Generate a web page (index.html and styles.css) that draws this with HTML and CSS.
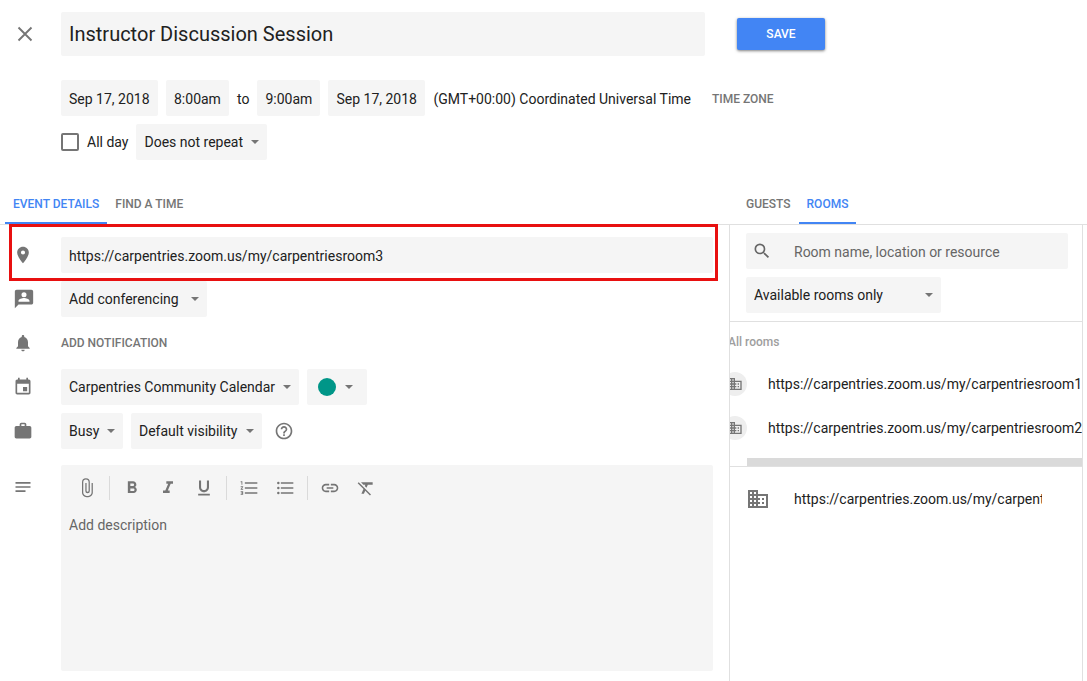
FILE: index.html
```html
<!DOCTYPE html>
<html lang="en">
<head>
<meta charset="utf-8">
<title>Instructor Discussion Session</title>
<meta name="viewport" content="width=device-width, initial-scale=1">
<link rel="stylesheet" href="styles.css">
</head>
<body>
<svg class="sprite" aria-hidden="true">
  <symbol id="building" viewBox="0 0 24 24"><path d="M12 7V3H2v18h20V7H12zM6 19H4v-2h2v2zm0-4H4v-2h2v2zm0-4H4V9h2v2zm0-4H4V5h2v2zm4 12H8v-2h2v2zm0-4H8v-2h2v2zm0-4H8V9h2v2zm0-4H8V5h2v2zm10 12h-8v-2h2v-2h-2v-2h2v-2h-2V9h8v10zm-2-8h-2v2h2v-2zm0 4h-2v2h2v-2z"/></symbol>
</svg>
<form class="page">
  <header class="head">
    <div class="title-row">
      <button type="button" class="close" aria-label="Close"><svg class="icon-l" viewBox="0 0 24 24"><path d="M5.500 5.500l13 13M18.500 5.500l-13 13" fill="none" stroke="currentColor" stroke-width="1.900"/></svg></button>
      <input class="field title" type="text" aria-label="Title" value="Instructor Discussion Session">
    </div>
    <div class="save-cell"><button type="button" class="save">SAVE</button></div>
  </header>

  <div class="when">
    <input class="field date" type="text" aria-label="Start date" value="Sep 17, 2018">
    <input class="field time" type="text" aria-label="Start time" value="8:00am">
    <span class="when-text">to</span>
    <input class="field time" type="text" aria-label="End time" value="9:00am">
    <input class="field date" type="text" aria-label="End date" value="Sep 17, 2018">
    <span class="when-text">(GMT+00:00) Coordinated Universal Time</span>
    <button type="button" class="text-btn zone">TIME ZONE</button>
  </div>
  <div class="when">
    <input class="check" type="checkbox" id="allday">
    <label for="allday">All day</label>
    <span class="drop"><select class="field" aria-label="Repeat"><option>Does not repeat</option></select><i class="arrow"></i></span>
  </div>

  <nav class="tabs">
    <div class="tab-group main-tabs">
      <button type="button" class="tab on">EVENT DETAILS</button>
      <button type="button" class="tab">FIND A TIME</button>
    </div>
    <div class="tab-group side-tabs">
      <button type="button" class="tab">GUESTS</button>
      <button type="button" class="tab on">ROOMS</button>
    </div>
  </nav>

  <main class="body">
    <section class="details">
      <div class="row">
        <div class="highlight"></div>
        <svg class="icon" viewBox="0 0 24 24"><path d="M12 2C8.130 2 5 5.130 5 9c0 5.250 7 13 7 13s7-7.750 7-13c0-3.870-3.130-7-7-7zm0 9.500a2.500 2.500 0 0 1 0-5 2.500 2.500 0 0 1 0 5z"/></svg>
        <input class="field line grow" type="text" aria-label="Location" value="https://carpentries.zoom.us/my/carpentriesroom3">
      </div>
      <div class="row">
        <svg class="icon wide" viewBox="0 0 24 24"><path fill-rule="evenodd" d="M20 2H4c-1.100 0-1.990.9-1.990 2L2 22l4-4h14c1.100 0 2-.9 2-2V4c0-1.100-.9-2-2-2zm-8 2.500a2.750 2.750 0 1 1 0 5.500 2.750 2.750 0 0 1 0-5.500zM18 15H6v-.9c0-2 4-3.100 6-3.100s6 1.100 6 3.100v.9z"/></svg>
        <span class="drop roomy"><select class="field" aria-label="Conferencing"><option>Add conferencing</option></select><i class="arrow"></i></span>
      </div>
      <div class="row">
        <svg class="icon" viewBox="0 0 24 24"><path d="M12 22c1.100 0 2-.9 2-2h-4c0 1.100.890 2 2 2zm6-6v-5c0-3.070-1.640-5.640-4.500-6.320V4c0-.830-.670-1.500-1.500-1.500s-1.500.670-1.500 1.500v.680C7.630 5.360 6 7.920 6 11v5l-2 2v1h16v-1l-2-2z"/></svg>
        <button type="button" class="text-btn">ADD NOTIFICATION</button>
      </div>
      <div class="row">
        <svg class="icon" viewBox="0 0 24 24"><path d="M17 12h-5v5h5v-5zM16 1v2H8V1H6v2H5c-1.110 0-1.990.9-1.990 2L3 19c0 1.100.890 2 2 2h14c1.100 0 2-.9 2-2V5c0-1.100-.9-2-2-2h-1V1h-2zm3 18H5V8h14v11z"/></svg>
        <span class="drop snug"><select class="field" aria-label="Calendar"><option>Carpentries Community Calendar</option></select><i class="arrow"></i></span>
        <button type="button" class="field colour" aria-label="Event colour"><i class="dot"></i><i class="arrow"></i></button>
      </div>
      <div class="row">
        <svg class="icon" viewBox="0 0 24 24"><path fill-rule="evenodd" d="M20 6h-4V4c0-1.110-.890-2-2-2h-4c-1.110 0-2 .890-2 2v2H4c-1.110 0-1.990.890-1.990 2L2 19c0 1.110.890 2 2 2h16c1.110 0 2-.890 2-2V8c0-1.110-.890-2-2-2zm-6 0h-4V4h4v2z"/></svg>
        <span class="drop snug"><select class="field" aria-label="Availability"><option>Busy</option></select><i class="arrow"></i></span>
        <span class="drop"><select class="field" aria-label="Visibility"><option>Default visibility</option></select><i class="arrow"></i></span>
        <button type="button" class="help" aria-label="Help"><svg class="icon-m" viewBox="0 0 24 24"><path d="M11 18h2v-2h-2v2zm1-16C6.480 2 2 6.480 2 12s4.480 10 10 10 10-4.480 10-10S17.520 2 12 2zm0 18c-4.410 0-8-3.590-8-8s3.590-8 8-8 8 3.590 8 8-3.590 8-8 8zm0-14c-2.210 0-4 1.790-4 4h2c0-1.100.9-2 2-2s2 .9 2 2c0 2-3 1.750-3 5h2c0-2.250 3-2.500 3-5 0-2.210-1.790-4-4-4z"/></svg></button>
      </div>
      <div class="row desc-row">
        <svg class="icon" viewBox="0 0 24 24"><path d="M3 18h12v-2H3v2zM3 6v2h18V6H3zm0 7h18v-2H3v2z"/></svg>
        <div class="desc">
          <div class="toolbar">
            <button type="button" class="tool" aria-label="Attach"><svg class="icon-m" viewBox="0 0 24 24"><path d="M17.500 6v11.500c0 2.210-1.790 4-4 4h-2c-2.210 0-4-1.790-4-4V5A3 3 0 0 1 13.900 5v10.500c0 .550-.450 1-1 1s-1.400-.450-1.400-1V6H10v9.500a2.700 2.700 0 0 0 5.400 0V5a4.700 4.700 0 0 0-9.400 0v12.500C6 20.540 8.460 23 11.500 23h2c3.040 0 5.500-2.460 5.500-5.500V6h-1.500z"/></svg></button>
            <span class="sep"></span>
            <button type="button" class="tool" aria-label="Bold"><svg class="icon-m" viewBox="0 0 24 24"><path d="M15.600 10.790c.970-.670 1.650-1.770 1.650-2.790 0-2.260-1.750-4-4-4H7v14h7.040c2.090 0 3.710-1.700 3.710-3.790 0-1.520-.860-2.820-2.150-3.420zM10 6.500h3c.830 0 1.500.670 1.500 1.500s-.670 1.500-1.500 1.500h-3v-3zm3.500 9H10v-3h3.500c.830 0 1.500.670 1.500 1.500s-.670 1.500-1.500 1.500z"/></svg></button>
            <button type="button" class="tool" aria-label="Italic"><svg class="icon-m" viewBox="0 0 24 24"><path d="M10 4v3h2.210l-3.420 8H6v3h8v-3h-2.210l3.420-8H18V4z"/></svg></button>
            <button type="button" class="tool" aria-label="Underline"><svg class="icon-m" viewBox="0 0 24 24"><path d="M12 17c3.310 0 6-2.690 6-6V3h-2.500v8c0 1.930-1.570 3.500-3.500 3.500S8.500 12.930 8.500 11V3H6v8c0 3.310 2.690 6 6 6zm-7 2v2h14v-2H5z"/></svg></button>
            <span class="sep"></span>
            <button type="button" class="tool" aria-label="Numbered list"><svg class="icon-m" viewBox="0 0 24 24"><path d="M2 17h2v.5H3v1h1v.5H2v1h3v-4H2v1zm1-9h1V4H2v1h1v3zm-1 3h1.800L2 13.100v.9h3v-1H3.200L5 10.900V10H2v1zm5-6v2h15V5H7zm0 14h15v-2H7v2zm0-6h15v-2H7v2z"/></svg></button>
            <button type="button" class="tool" aria-label="Bulleted list"><svg class="icon-m" viewBox="0 0 24 24"><path d="M4 10.500a1.500 1.500 0 0 0 0 3 1.500 1.500 0 0 0 0-3zm0-6a1.500 1.500 0 0 0 0 3 1.500 1.500 0 0 0 0-3zm0 12a1.500 1.500 0 0 0 0 3 1.500 1.500 0 0 0 0-3zM7 19h15v-2H7v2zm0-6h15v-2H7v2zm0-8v2h15V5H7z"/></svg></button>
            <span class="sep"></span>
            <button type="button" class="tool" aria-label="Link"><svg class="icon-m" viewBox="0 0 24 24"><path d="M3.900 12c0-1.710 1.390-3.100 3.100-3.100h4V7H7c-2.760 0-5 2.240-5 5s2.240 5 5 5h4v-1.900H7c-1.710 0-3.100-1.390-3.100-3.100zM8 13h8v-2H8v2zm9-6h-4v1.900h4c1.710 0 3.100 1.390 3.100 3.100s-1.390 3.100-3.100 3.100h-4V17h4c2.760 0 5-2.240 5-5s-2.240-5-5-5z"/></svg></button>
            <button type="button" class="tool" aria-label="Clear formatting"><svg class="icon-m" viewBox="0 0 24 24"><path d="M3.270 5L2 6.270l6.970 6.970L6.500 19h3l1.570-3.660L16.730 21 18 19.730 3.550 5.270 3.270 5zM6 5v.180L8.820 8h2.400l-.720 1.680 2.100 2.100L14.210 8H20V5H6z"/></svg></button>
          </div>
          <textarea class="desc-text" aria-label="Description" placeholder="Add description"></textarea>
        </div>
      </div>
    </section>

    <aside class="side">
      <div class="filters">
        <label class="field search">
          <svg class="icon-m" viewBox="0 0 24 24"><path d="M15.500 14h-.790l-.280-.270A6.471 6.471 0 0 0 16 9.500 6.500 6.500 0 1 0 9.500 16c1.610 0 3.090-.590 4.230-1.570l.270.280v.790l5 4.990L20.490 19l-4.990-5zm-6 0C7.010 14 5 11.990 5 9.500S7.010 5 9.500 5 14 7.010 14 9.500 11.990 14 9.500 14z"/></svg>
          <input class="search-text line" type="text" aria-label="Search rooms" placeholder="Room name, location or resource">
        </label>
        <span class="drop avail"><select class="field" aria-label="Room filter"><option>Available rooms only</option></select><i class="arrow"></i></span>
      </div>
      <div class="rooms">
        <h2 class="rooms-head">All rooms</h2>
        <ul class="room-list">
          <li class="room"><span class="badge"><svg class="icon-s"><use href="#building"/></svg></span>https://carpentries.zoom.us/my/carpentriesroom1</li>
          <li class="room"><span class="badge"><svg class="icon-s"><use href="#building"/></svg></span>https://carpentries.zoom.us/my/carpentriesroom2</li>
        </ul>
        <div class="scrollbar"></div>
      </div>
      <div class="chosen">
        <svg class="icon-l"><use href="#building"/></svg>
        <span class="chosen-name">https://carpentries.zoom.us/my/carpentriesroom3</span>
      </div>
    </aside>
  </main>
</form>
</body>
</html>
```

FILE: styles.css
```css
* { box-sizing: border-box; }

body {
  margin: 0;
  background: #fff;
  color: #212121;
  font: 14px/20px Roboto, "Liberation Sans", sans-serif;
}

button, input, select, textarea {
  margin: 0;
  border: 0;
  padding: 0;
  background: none;
  color: inherit;
  font: inherit;
  appearance: none;
}

button { cursor: pointer; }

svg { display: block; flex: none; fill: currentColor; }

.sprite { position: absolute; width: 0; height: 0; }

.icon-s { width: 16px; height: 16px; }
.icon-m { width: 20px; height: 20px; }
.icon-l { width: 24px; height: 24px; }

.page {
  display: flex;
  flex-direction: column;
  min-height: 100vh;
  overflow: hidden;
}

.field {
  height: 36px;
  padding: 0 8px;
  border-radius: 2px;
  background: #f5f5f5;
}

/* Title and save */
.head {
  display: grid;
  grid-template-columns: minmax(0, 1fr) 358px;
  align-items: center;
  padding-top: 12px;
  margin-bottom: 24px;
}

.title-row { display: flex; align-items: center; padding-right: 24px; }

.close { width: 48px; margin-right: 13px; padding-left: 13px; color: #757575; }

.title { flex: 1; min-width: 0; height: 44px; font-size: 20px; }

.save-cell { padding-left: 8px; }

.save {
  width: 88px;
  height: 32px;
  border-radius: 2px;
  background: #4285f4;
  color: #fff;
  font-size: 12px;
  font-weight: 500;
  box-shadow: 0 1px 3px rgba(0, 0, 0, .5);
}

/* Date and repeat */
.when {
  display: flex;
  align-items: center;
  gap: 8px;
  padding-left: 61px;
  margin-bottom: 8px;
  white-space: nowrap;
}

.date { width: 97px; }
.time { width: 63px; }
.date, .time, .line, .when-text { padding-top: 2px; }

.text-btn { color: #757575; font-size: 12px; font-weight: 500; }
.zone { margin-left: 13px; padding-top: 2px; }

.check {
  width: 18px;
  height: 18px;
  border: 2px solid #757575;
  border-radius: 2px;
}

.drop { display: inline-grid; align-items: center; }
.drop > * { grid-area: 1 / 1; }
.drop .field { width: 100%; padding-right: 24px; }
.drop .arrow { justify-self: end; margin-right: 8px; pointer-events: none; }
.drop.roomy .field { padding-right: 28px; }
.drop.snug .field { padding-right: 23px; }

.arrow {
  border: 4px solid transparent;
  border-top-color: #757575;
  border-bottom: 0;
}

/* Tabs */
.tabs {
  display: grid;
  grid-template-columns: minmax(0, 1fr) 358px;
  margin-top: 16px;
  border-bottom: 1px solid #e0e0e0;
}

.tab-group { display: flex; }
.main-tabs { padding-left: 5px; }
.side-tabs { padding-left: 9px; }

.tab {
  height: 40px;
  padding: 0 8px;
  border-top: 2px solid transparent;
  border-bottom: 2px solid transparent;
  color: #757575;
  font-size: 12px;
  font-weight: 500;
}

.tab.on { border-bottom-color: #4285f4; color: #4285f4; }

.body {
  flex: 1;
  display: grid;
  grid-template-columns: minmax(0, 1fr) 354px;
  padding-right: 4px;
}

/* Event details */
.details {
  display: flex;
  flex-direction: column;
  gap: 8px;
  padding: 12px 16px 10px 13px;
}

.row {
  position: relative;
  display: flex;
  align-items: center;
  gap: 8px;
  min-height: 36px;
}

.icon { width: 20px; height: 20px; margin-right: 20px; color: #757575; }
.icon.wide { width: 22px; height: 22px; margin-right: 18px; }

.grow { flex: 1; min-width: 0; }

.highlight {
  position: absolute;
  inset: -13px -5px -8px -4px;
  z-index: 1;
  border: 3px solid #e81010;
  pointer-events: none;
}

.colour { display: flex; align-items: center; gap: 9px; width: 60px; padding: 0 11px; }
.dot { width: 18px; height: 18px; border-radius: 50%; background: #009688; }

.help { margin-left: 4px; color: #757575; }

.desc-row { flex: 1; align-items: stretch; margin-top: 8px; }
.desc-row .icon { margin-top: 12px; }

.desc {
  flex: 1;
  display: flex;
  flex-direction: column;
  min-height: 200px;
  border-radius: 2px;
  background: #f5f5f5;
}

.toolbar { display: flex; align-items: center; height: 46px; padding: 0 8px; color: #757575; }
.tool { display: grid; place-items: center; width: 36px; height: 36px; }
.sep { width: 1px; height: 24px; margin: 0 4px; background: #dadada; }

.desc-text { flex: 1; padding: 4px 8px; resize: none; }

::placeholder { color: #666; opacity: 1; }

/* Rooms */
.side {
  min-width: 0;
  border: solid #e0e0e0;
  border-width: 0 1px;
}

.filters {
  display: flex;
  flex-direction: column;
  align-items: flex-start;
  gap: 8px;
  padding: 8px 14px 8px 16px;
  border-bottom: 1px solid #e0e0e0;
}

.search { display: flex; align-items: center; gap: 22px; width: 100%; padding: 0 6px; color: #666; }
.search-text { flex: 1; min-width: 0; color: #212121; }
.avail { width: 195px; }

.rooms { overflow: hidden; border-bottom: 1px solid #e0e0e0; }

.rooms-head {
  margin: 0 0 0 -2px;
  padding: 10px 0;
  color: #9e9e9e;
  font-size: 12px;
  font-weight: 500;
}

.room-list { margin: 0 0 8px -7px; padding: 0; list-style: none; }

.room { display: flex; align-items: center; gap: 21px; height: 44px; white-space: nowrap; }

.badge {
  display: grid;
  place-items: center;
  flex: none;
  width: 24px;
  height: 24px;
  border-radius: 50%;
  background: #eee;
  color: #757575;
}

.scrollbar { height: 8px; margin-left: 17px; background: #dadada; }

.chosen { display: flex; align-items: center; gap: 24px; padding: 20px 40px 20px 16px; color: #757575; }
.chosen-name { overflow: hidden; color: #212121; white-space: nowrap; }
```
